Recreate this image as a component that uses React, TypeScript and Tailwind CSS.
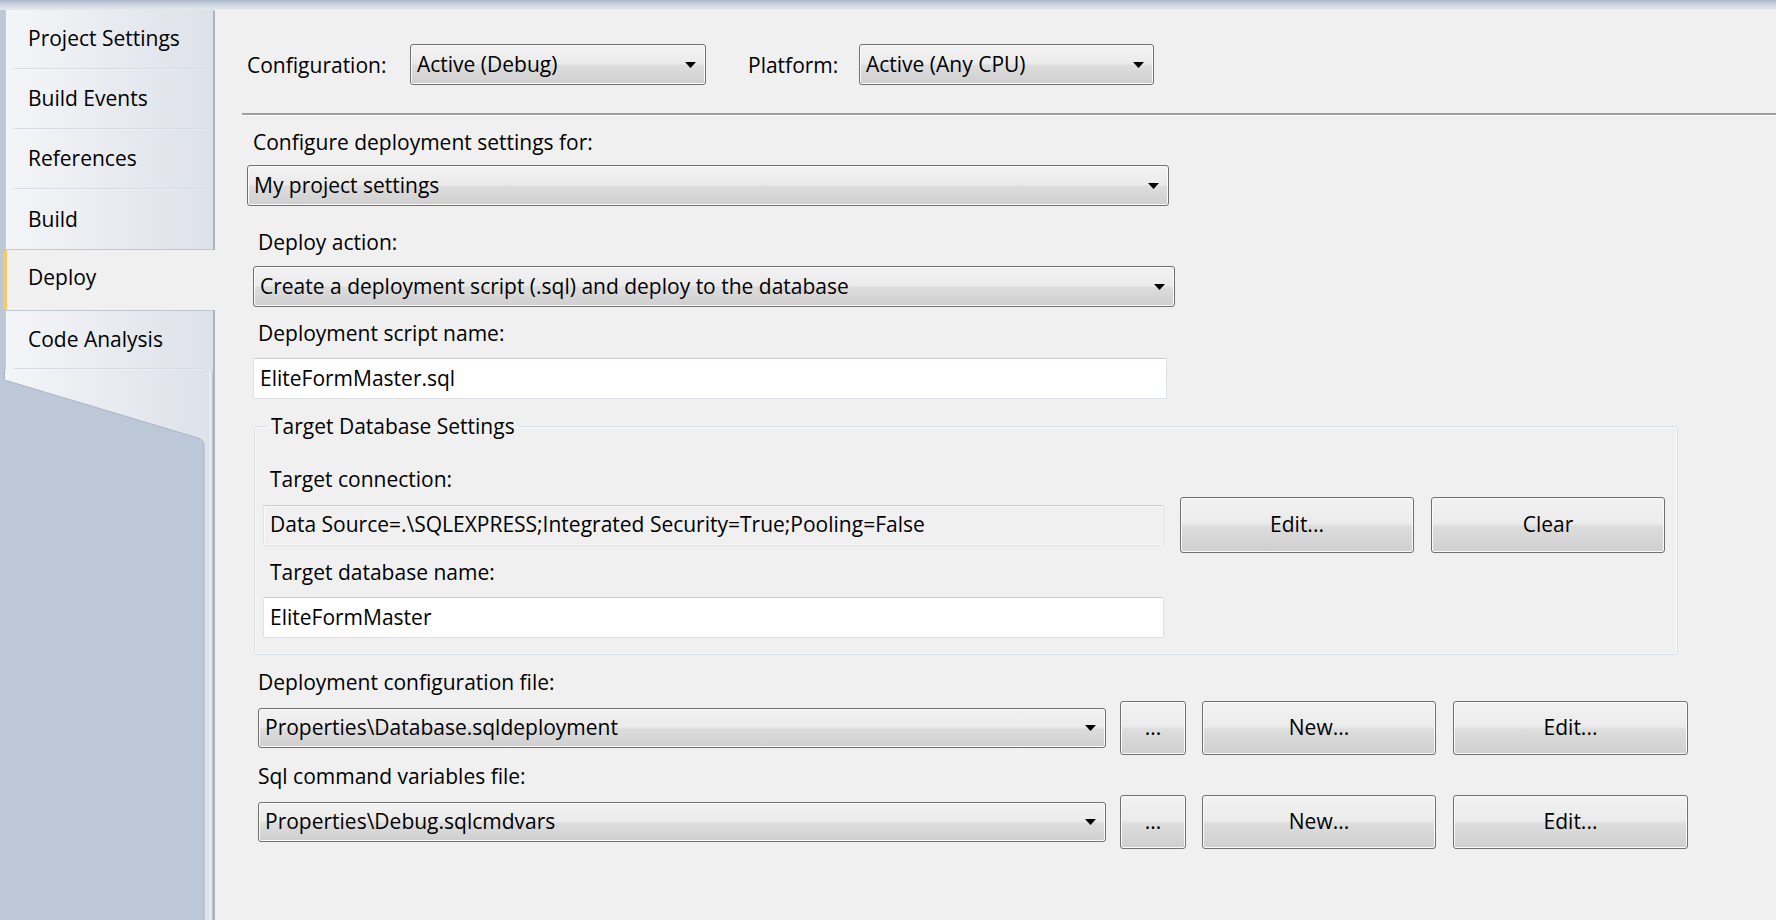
import React from "react"

const tabs = ["Project Settings", "Build Events", "References", "Build", "Deploy", "Code Analysis"]
const active = "Deploy"

function Arrow() {
  return (
    <svg width="11" height="6" viewBox="0 0 11 6" className="shrink-0">
      <path d="M0 0H11L5.5 6Z" fill="#000" />
    </svg>
  )
}

function Combo({ value, className }: { value: string; className: string }) {
  return (
    <div
      className={`flex items-center justify-between rounded-[3px] border border-[#707070] bg-[linear-gradient(to_bottom,#f2f2f2_0%,#ebebeb_48%,#dddddd_52%,#cfcfcf_100%)] pl-[6px] pr-[9px] shadow-[inset_0_0_0_1px_#fbfbfb] ${className}`}
    >
      <span className="whitespace-nowrap">{value}</span>
      <Arrow />
    </div>
  )
}

function Button({ label, className }: { label: string; className: string }) {
  return (
    <div
      className={`flex items-center justify-center rounded-[3px] border border-[#707070] bg-[linear-gradient(to_bottom,#f2f2f2_0%,#ebebeb_48%,#dddddd_52%,#cfcfcf_100%)] shadow-[inset_0_0_0_1px_#fbfbfb] ${className}`}
    >
      {label}
    </div>
  )
}

function TextBox({ value, className }: { value: string; className: string }) {
  return (
    <div
      className={`flex h-[41px] items-center rounded-[2px] border border-[#dde1e7] border-t-[#c9cdd3] pl-[6px] whitespace-nowrap ${className}`}
    >
      {value}
    </div>
  )
}

function Label({ text, className }: { text: string; className: string }) {
  return <div className={`h-[24px] leading-[24px] whitespace-nowrap ${className}`}>{text}</div>
}

function Sidebar() {
  return (
    <div className="flex w-[213px] shrink-0 flex-col pl-[5px]">
      <div className="flex flex-col border-l border-[#c3cbd7] bg-[linear-gradient(to_right,#f4f5f8,#dde1e9)]">
        {tabs.map((t, i) => {
          const isActive = t === active
          const beforeActive = tabs[i + 1] === active
          const afterActive = tabs[i - 1] === active
          if (isActive) {
            return (
              <div
                key={t}
                className="relative z-10 -ml-[3px] mr-[-2px] flex h-[60px] items-center rounded-l-[3px] border-l-[4px] border-[#f3c96c] bg-[#f0f0f0] pb-[4px] pl-[21px]"
              >
                {t}
              </div>
            )
          }
          return (
            <div
              key={t}
              className={`flex h-[60px] flex-col ${afterActive ? "border-t border-[#bfc6d1]" : ""} ${beforeActive ? "border-b border-[#bfc6d1]" : ""}`}
            >
              <div className="flex flex-1 items-center pl-[22px]">{t}</div>
              {!beforeActive && (
                <div className="mx-[8px] h-[2px] border-t border-[#d6dae2] bg-[linear-gradient(to_right,#f7f8fa,#e8ebf0)]" />
              )}
            </div>
          )
        })}
      </div>
      <svg width="208" height="550" viewBox="0 0 208 550" className="-ml-[1px] block">
        <defs>
          <linearGradient id="pg" x1="0" x2="1" y1="0" y2="0">
            <stop offset="0" stopColor="#f4f5f8" />
            <stop offset="1" stopColor="#dde1e9" />
          </linearGradient>
        </defs>
        <path d="M0 0H208V550H200V76Q200 70 194 68L0 10Z" fill="url(#pg)" />
        <path d="M0.5 0V10L194 68Q200 70 200 76V550" fill="none" stroke="#a9b4c4" strokeWidth="1" />
        <path d="M206 0V550" stroke="#e9ecf1" strokeWidth="2" />
      </svg>
    </div>
  )
}

export default function App() {
  return (
    <div className="flex h-[920px] w-[1776px] flex-col overflow-hidden bg-[#bcc8d8] font-['Open_Sans','Noto_Sans',sans-serif] text-[21px] text-[#000]">
      <div className="h-[10px] shrink-0 bg-[linear-gradient(to_bottom,#a8b5c8,#ccd4df_45%,#e6e9ee)]" />
      <div className="flex flex-1">
        <Sidebar />
        <div className="flex flex-1 flex-col border-l-2 border-t border-[#aab3c0] border-t-[#f8f8f8] bg-[#f0f0f0]">
          <div className="mt-[33px] flex items-center pl-[32px]">
            <Label text="Configuration:" className="w-[163px]" />
            <Combo value="Active (Debug)" className="h-[41px] w-[296px]" />
            <Label text="Platform:" className="ml-[42px] w-[111px]" />
            <Combo value="Active (Any CPU)" className="h-[41px] w-[295px]" />
          </div>

          <div className="ml-[27px] mt-[28px] h-[3px] border-b border-white bg-[#a0a0a0]" />

          <Label text="Configure deployment settings for:" className="ml-[38px] mt-[14px]" />
          <Combo value="My project settings" className="ml-[32px] mt-[11px] h-[41px] w-[922px]" />

          <Label text="Deploy action:" className="ml-[43px] mt-[24px]" />
          <Combo
            value="Create a deployment script (.sql) and deploy to the database"
            className="ml-[38px] mt-[12px] h-[41px] w-[922px]"
          />

          <Label text="Deployment script name:" className="ml-[43px] mt-[14px]" />
          <TextBox value="EliteFormMaster.sql" className="ml-[38px] mt-[13px] w-[914px] bg-white" />

          <fieldset className="ml-[39px] mt-[15px] w-[1424px] rounded-[3px] border border-[#d5dfe5] px-[8px] pb-[16px] shadow-[inset_0_0_0_1px_#fafafa]">
            <legend className="ml-[4px] h-[24px] px-[4px] leading-[24px]">Target Database Settings</legend>
            <Label text="Target connection:" className="ml-[7px] mt-[29px]" />
            <div className="mt-[6px] flex items-center">
              <TextBox
                value="Data Source=.\SQLEXPRESS;Integrated Security=True;Pooling=False"
                className="w-[901px] bg-[#f0f0f0] shadow-[inset_0_0_0_1px_#f9f9f9]"
              />
              <Button label="Edit..." className="ml-[16px] h-[56px] w-[234px]" />
              <Button label="Clear" className="ml-[17px] h-[56px] w-[234px]" />
            </div>
            <Label text="Target database name:" className="ml-[7px] mt-[7px]" />
            <TextBox value="EliteFormMaster" className="mt-[13px] w-[901px] bg-white" />
          </fieldset>

          <Label text="Deployment configuration file:" className="ml-[43px] mt-[15px]" />
          <div className="ml-[43px] mt-[7px] flex items-center">
            <Combo value="Properties\Database.sqldeployment" className="h-[40px] w-[848px]" />
            <Button label="..." className="ml-[14px] h-[54px] w-[66px]" />
            <Button label="New..." className="ml-[16px] h-[54px] w-[234px]" />
            <Button label="Edit..." className="ml-[17px] h-[54px] w-[235px]" />
          </div>

          <Label text="Sql command variables file:" className="ml-[43px] mt-[9px]" />
          <div className="ml-[43px] mt-[7px] flex items-center">
            <Combo value="Properties\Debug.sqlcmdvars" className="h-[40px] w-[848px]" />
            <Button label="..." className="ml-[14px] h-[54px] w-[66px]" />
            <Button label="New..." className="ml-[16px] h-[54px] w-[234px]" />
            <Button label="Edit..." className="ml-[17px] h-[54px] w-[235px]" />
          </div>
        </div>
      </div>
    </div>
  )
}
